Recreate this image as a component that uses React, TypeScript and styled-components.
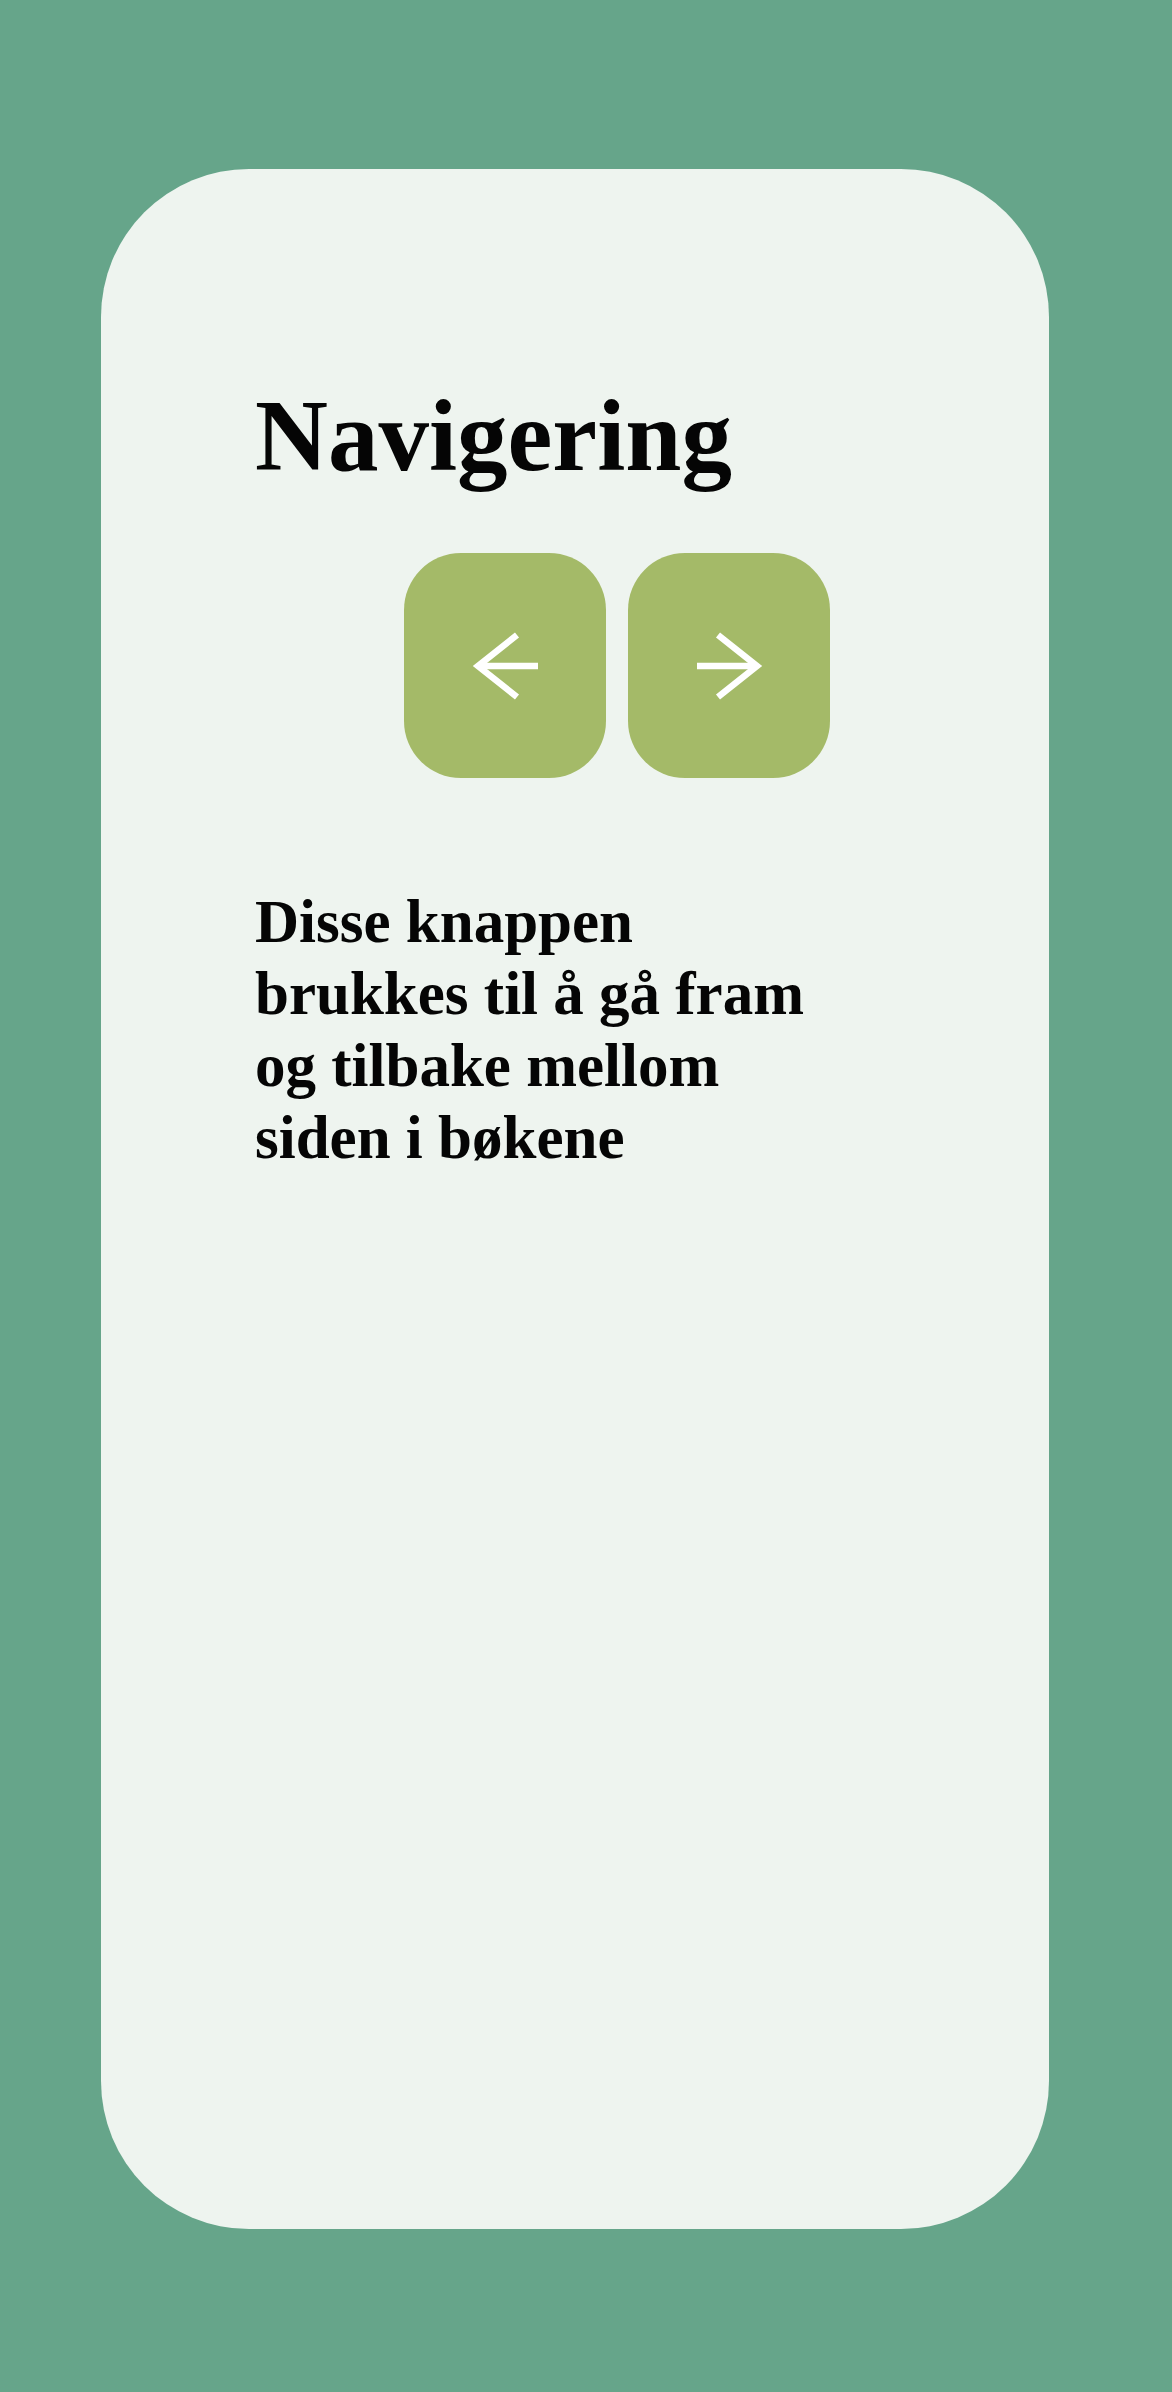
import React from "react";
import styled, { createGlobalStyle } from "styled-components";

const GlobalStyle = createGlobalStyle`
  html, body {
    margin: 0;
    padding: 0;
    background: #66a58a;
  }
  body {
    font-family: "Liberation Serif", "Times New Roman", serif;
    color: #050505;
  }
`;

const Page = styled.div`
  width: 1172px;
  min-height: 2392px;
  background: #66a58a;
  padding: 169px 0 163px 101px;
  box-sizing: border-box;
`;

const Card = styled.main`
  width: 948px;
  height: 2060px;
  background: #eef4ef;
  border-radius: 148px;
  box-sizing: border-box;
  padding: 216px 0 0 154px;
  display: flex;
  flex-direction: column;
`;

const Title = styled.h1`
  margin: 0;
  font-family: "Liberation Serif", "Times New Roman", serif;
  font-weight: 700;
  font-size: 101px;
  line-height: 103px;
  white-space: nowrap;
`;

const ButtonRow = styled.div`
  display: flex;
  gap: 22px;
  margin: 65px 0 0 149px;
`;

const NavButton = styled.button`
  width: 202px;
  height: 225px;
  border: none;
  padding: 0;
  background: #a4ba68;
  border-radius: 57px;
  display: flex;
  align-items: center;
  justify-content: center;
  cursor: pointer;
`;

const Description = styled.p`
  margin: 108px 0 0 0;
  font-family: "Liberation Serif", "Times New Roman", serif;
  font-weight: 700;
  font-size: 61px;
  line-height: 72px;
  white-space: nowrap;
`;

const Arrow: React.FC<{ dir: "left" | "right" }> = ({ dir }) => (
  <svg
    width="65"
    height="64"
    viewBox="0 0 65 64"
    fill="none"
    stroke="#ffffff"
    strokeWidth={6.5}
    style={{ overflow: "visible", transform: dir === "right" ? "scaleX(-1)" : undefined }}
  >
    <path d="M44 1 L5 32 L44 63" strokeLinejoin="miter" />
    <path d="M5 32 H65" />
  </svg>
);

export default function App() {
  return (
    <>
      <GlobalStyle />
      <Page>
        <Card>
          <Title>Navigering</Title>
          <ButtonRow>
            <NavButton aria-label="Forrige">
              <Arrow dir="left" />
            </NavButton>
            <NavButton aria-label="Neste">
              <Arrow dir="right" />
            </NavButton>
          </ButtonRow>
          <Description>
            Disse knappen
            <br />
            brukkes til å gå fram
            <br />
            og tilbake mellom
            <br />
            siden i bøkene
          </Description>
        </Card>
      </Page>
    </>
  );
}
